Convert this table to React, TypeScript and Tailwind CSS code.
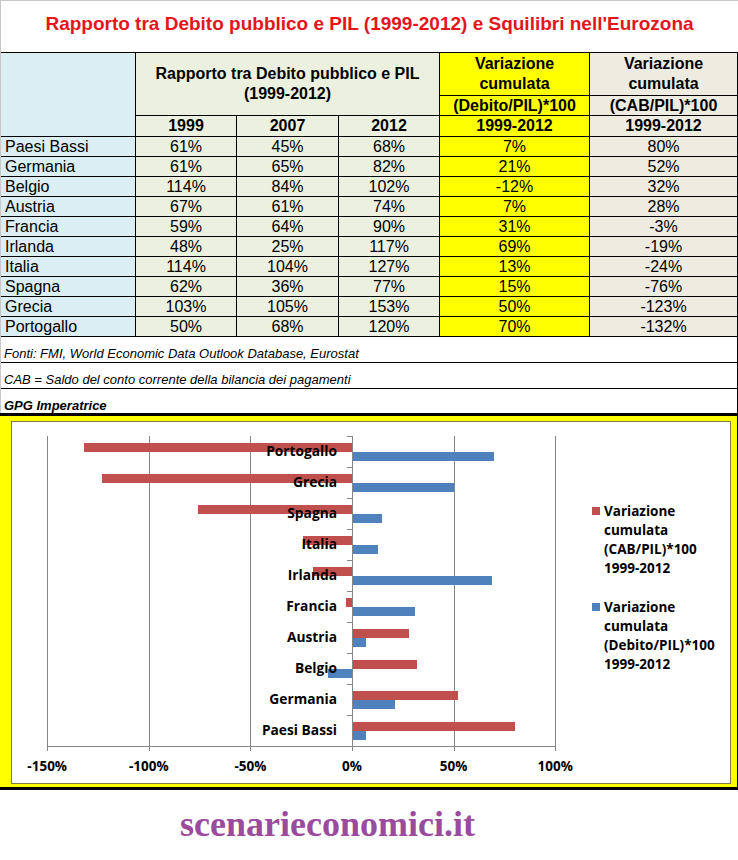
const rows: string[][] = [
  ["Paesi Bassi", "61%", "45%", "68%", "7%", "80%"],
  ["Germania", "61%", "65%", "82%", "21%", "52%"],
  ["Belgio", "114%", "84%", "102%", "-12%", "32%"],
  ["Austria", "67%", "61%", "74%", "7%", "28%"],
  ["Francia", "59%", "64%", "90%", "31%", "-3%"],
  ["Irlanda", "48%", "25%", "117%", "69%", "-19%"],
  ["Italia", "114%", "104%", "127%", "13%", "-24%"],
  ["Spagna", "62%", "36%", "77%", "15%", "-76%"],
  ["Grecia", "103%", "105%", "153%", "50%", "-123%"],
  ["Portogallo", "50%", "68%", "120%", "70%", "-132%"],
];

// chart geometry (px inside the white plot box)
const ZERO = 340;
const K = 2.032;
const TOP = 14;
const BAND = 31;
const px = (v: number) => ZERO + v * K;

function Chart() {
  const cats = [...rows].reverse();
  const grid = [-150, -100, -50, 50, 100];
  const ticks = [-150, -100, -50, 0, 50, 100];
  const bottom = TOP + BAND * 10;

  return (
    <svg width={718} height={361} className="block font-['Open_Sans',sans-serif] font-bold" shapeRendering="crispEdges">
      {grid.map((g) => (
        <line key={g} x1={Math.round(px(g)) + 0.5} x2={Math.round(px(g)) + 0.5} y1={TOP} y2={bottom} stroke="#868686" />
      ))}

      {cats.map((c, i) => {
        const cab = parseInt(c[5]);
        const deb = parseInt(c[4]);
        const y = TOP + i * BAND + 7;
        return (
          <g key={c[0]}>
            <rect x={Math.min(px(cab), ZERO)} y={y} width={Math.abs(cab) * K} height={9} fill="#c0504d" />
            <rect x={Math.min(px(deb), ZERO)} y={y + 9} width={Math.abs(deb) * K} height={9} fill="#4f81bd" />
          </g>
        );
      })}

      {cats.map((c, i) => (
        <text key={c[0]} x={325} y={TOP + i * BAND + 14} textAnchor="end" dominantBaseline="central" fontSize={13.75} fill="#000">
          {c[0]}
        </text>
      ))}

      {/* axes */}
      <line x1={ZERO + 0.5} x2={ZERO + 0.5} y1={TOP} y2={bottom} stroke="#868686" />
      {Array.from({ length: 11 }).map((_, i) => (
        <line key={i} x1={ZERO - 5} x2={ZERO} y1={TOP + i * BAND + 0.5} y2={TOP + i * BAND + 0.5} stroke="#868686" />
      ))}
      <line x1={Math.round(px(-150))} x2={Math.round(px(100)) + 1} y1={bottom + 0.5} y2={bottom + 0.5} stroke="#868686" />
      {ticks.map((t) => (
        <line key={t} x1={Math.round(px(t)) + 0.5} x2={Math.round(px(t)) + 0.5} y1={bottom} y2={bottom + 5} stroke="#868686" />
      ))}
      {ticks.map((t) => (
        <text key={t} x={px(t)} y={344} textAnchor="middle" dominantBaseline="central" fontSize={13.5} fill="#000">
          {t}%
        </text>
      ))}

      {/* legend */}
      <rect x={580} y={85} width={8} height={8} fill="#c0504d" />
      {["Variazione", "cumulata", "(CAB/PIL)*100", "1999-2012"].map((s, i) => (
        <text key={s} x={592} y={89 + i * 19} dominantBaseline="central" fontSize={13.5} fill="#000">
          {s}
        </text>
      ))}
      <rect x={580} y={181} width={8} height={8} fill="#4f81bd" />
      {["Variazione", "cumulata", "(Debito/PIL)*100", "1999-2012"].map((s, i) => (
        <text key={s} x={592} y={185 + i * 19} dominantBaseline="central" fontSize={13.5} fill="#000">
          {s}
        </text>
      ))}
    </svg>
  );
}

export default function App() {
  return (
    <div className="w-[738px] bg-white font-['Liberation_Sans',Arial,sans-serif] text-black">
      {/* Title */}
      <div className="flex h-[52px] items-center justify-center border-l border-t border-[#c8c8c8] pb-[4px] text-[19px] font-bold text-[#e3161b]">
        Rapporto tra Debito pubblico e PIL (1999-2012) e Squilibri nell'Eurozona
      </div>

      {/* Table */}
      <div className="border-l border-[#c8c8c8]">
        <div className="grid grid-cols-[135px_101px_102px_101px_150px_148px] grid-rows-[43px_20px_21px] border-t border-black text-[16px] font-bold leading-[20px]">
          <div className="row-span-3 border-b border-r border-black bg-[#dbeef3]" />
          <div className="col-span-3 row-span-2 flex items-center justify-center border-b border-r border-black bg-[#ebf1de] text-center">
            Rapporto tra Debito pubblico e PIL
            <br />
            (1999-2012)
          </div>
          <div className="flex items-center justify-center border-b border-r border-black bg-[#ffff00] text-center">
            Variazione
            <br />
            cumulata
          </div>
          <div className="flex items-center justify-center border-b border-r border-black bg-[#eeece1] text-center">
            Variazione
            <br />
            cumulata
          </div>
          <div className="flex items-center justify-center border-b border-r border-black bg-[#ffff00]">(Debito/PIL)*100</div>
          <div className="flex items-center justify-center border-b border-r border-black bg-[#eeece1]">(CAB/PIL)*100</div>
          <div className="flex items-center justify-center border-b border-r border-black bg-[#ebf1de]">1999</div>
          <div className="flex items-center justify-center border-b border-r border-black bg-[#ebf1de]">2007</div>
          <div className="flex items-center justify-center border-b border-r border-black bg-[#ebf1de]">2012</div>
          <div className="flex items-center justify-center border-b border-r border-black bg-[#ffff00]">1999-2012</div>
          <div className="flex items-center justify-center border-b border-r border-black bg-[#eeece1]">1999-2012</div>
        </div>

        <div className="grid grid-cols-[135px_101px_102px_101px_150px_148px] text-[16px] leading-[19px]">
          {rows.map((r) => (
            <div key={r[0]} className="contents">
              <div className="h-[20px] border-b border-r border-black bg-[#dbeef3] pl-[4px]">{r[0]}</div>
              <div className="h-[20px] border-b border-r border-black bg-[#ebf1de] text-center">{r[1]}</div>
              <div className="h-[20px] border-b border-r border-black bg-[#ebf1de] text-center">{r[2]}</div>
              <div className="h-[20px] border-b border-r border-black bg-[#ebf1de] text-center">{r[3]}</div>
              <div className="h-[20px] border-b border-r border-black bg-[#ffff00] text-center">{r[4]}</div>
              <div className="h-[20px] border-b border-r border-black bg-[#eeece1] text-center">{r[5]}</div>
            </div>
          ))}
        </div>

        {/* Notes */}
        <div className="flex h-[26px] items-end border-b border-r border-black pb-[1px] pl-[3px] text-[13px] italic leading-[15px]">
          Fonti: FMI, World Economic Data Outlook Database, Eurostat
        </div>
        <div className="flex h-[26px] items-end border-b border-r border-black pb-[1px] pl-[3px] text-[13px] italic leading-[15px]">
          CAB = Saldo del conto corrente della bilancia dei pagamenti
        </div>
        <div className="flex h-[24px] items-end border-r border-black pl-[3px] text-[13px] font-bold italic leading-[15px]">
          GPG Imperatrice
        </div>
      </div>

      {/* Chart */}
      <div className="border-b-[3px] border-r border-t-[3px] border-black bg-[#ffff00] pb-[3px] pl-[11px] pr-[6px] pt-[5px]">
        <div className="h-[363px] w-[720px] border border-[#7b7b43] bg-white">
          <Chart />
        </div>
      </div>

      {/* Footer brand */}
      <div className="pb-[19px] pl-[180px] pt-[16px] font-['Liberation_Serif',serif] text-[36px] font-bold leading-[36px] text-[#9c4a9e]">
        scenarieconomici.it
      </div>
    </div>
  );
}
